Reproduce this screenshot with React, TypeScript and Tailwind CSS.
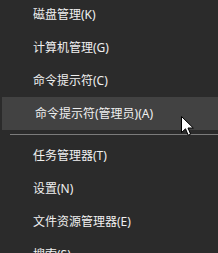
import React from "react";

const top = ["磁盘管理(K)", "计算机管理(G)", "命令提示符(C)", "命令提示符(管理员)(A)"];
const bottom = ["任务管理器(T)", "设置(N)", "文件资源管理器(E)", "搜索(S)"];

function Row({ label, active }: { label: string; active?: boolean }) {
  return (
    <div
      className={
        "h-[33px] flex items-center pl-[33px] text-[12px] text-[#f0f0f0] " +
        (active ? "ml-[2px] bg-[#424242] pl-[31px]" : "")
      }
    >
      {label}
    </div>
  );
}

export default function App() {
  return (
    <div
      className="relative w-[218px] h-[253px] overflow-hidden bg-[#2b2b2b]"
      style={{ fontFamily: '"Noto Sans", "Noto Sans CJK SC", sans-serif' }}
    >
      <div className="-mt-[2px] flex flex-col">
        {top.map((t, i) => (
          <Row key={t} label={t} active={i === 3} />
        ))}
        <div className="h-[9px] flex items-center pl-[10px]">
          <div className="h-px w-full bg-[#7c7c7c]" />
        </div>
        {bottom.map((t) => (
          <Row key={t} label={t} />
        ))}
      </div>
      <svg
        className="absolute left-[181px] top-[116px]"
        width="14"
        height="21"
        viewBox="0 0 14 21"
      >
        <path
          d="M0.5 0.5 L0.5 16.5 L4.5 12.8 L7.2 19.2 L9.6 18.2 L7 12 L12.3 12 Z"
          fill="#ffffff"
          stroke="#000000"
          strokeWidth="1"
          strokeLinejoin="miter"
        />
      </svg>
    </div>
  );
}
